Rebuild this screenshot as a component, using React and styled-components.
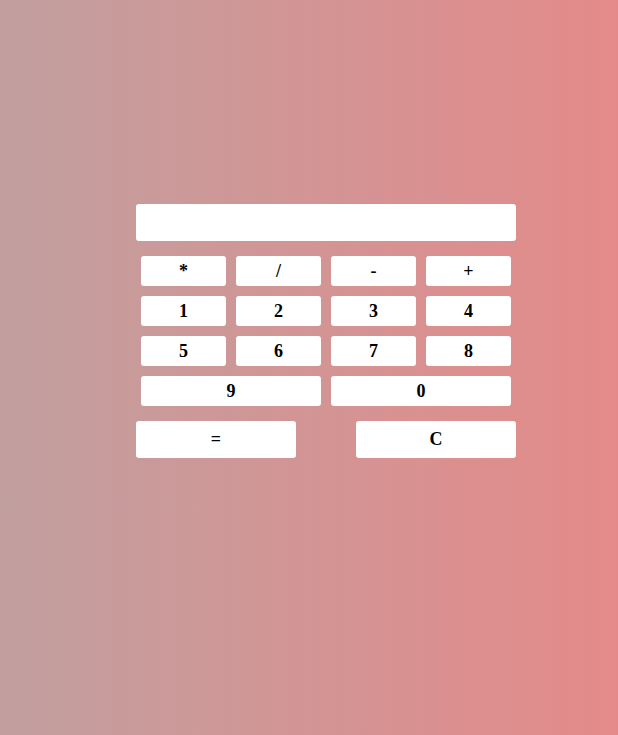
import React, { useState } from "react";
import styled, { createGlobalStyle } from "styled-components";

const GlobalStyle = createGlobalStyle`
  html, body {
    margin: 0;
    min-height: 100%;
  }
  body {
    min-height: 100vh;
    background: linear-gradient(to right, #c19f9f, #e48a8a);
    font-family: "Liberation Serif", "Times New Roman", serif;
  }
`;

const Page = styled.main`
  padding: 204px 0 0 136px;
`;

const Calculator = styled.div`
  width: 380px;
  display: flex;
  flex-direction: column;
`;

const Display = styled.input`
  box-sizing: border-box;
  width: 380px;
  height: 37px;
  border: none;
  border-radius: 3px;
  background: #fff;
  padding: 0 10px;
  font-family: inherit;
  font-size: 18px;
  outline: none;
`;

const Keys = styled.div`
  display: grid;
  grid-template-columns: repeat(4, 85px);
  grid-auto-rows: 30px;
  gap: 10px;
  padding: 0 5px;
  margin-top: 15px;
`;

const Key = styled.button`
  grid-column: span ${({ $span }) => $span || 1};
  border: none;
  border-radius: 3px;
  background: #fff;
  color: #000;
  font-family: inherit;
  font-weight: bold;
  font-size: 18px;
  padding: 0;
  cursor: pointer;
`;

const Actions = styled.div`
  display: flex;
  justify-content: space-between;
  margin-top: 15px;
`;

const ActionButton = styled.button`
  width: 160px;
  height: 37px;
  border: none;
  border-radius: 3px;
  background: #fff;
  color: #000;
  font-family: inherit;
  font-weight: bold;
  font-size: 18px;
  padding: 0;
  cursor: pointer;
`;

const keys = ["*", "/", "-", "+", "1", "2", "3", "4", "5", "6", "7", "8"];

const App = () => {
  const [value, setValue] = useState("");

  const press = (k) => setValue(value + k);

  const calculate = () => {
    try {
      // eslint-disable-next-line no-new-func
      setValue(String(Function(`return (${value})`)()));
    } catch (e) {
      setValue("Error");
    }
  };

  return (
    <>
      <GlobalStyle />
      <Page>
        <Calculator>
          <Display type="text" value={value} readOnly />
          <Keys>
            {keys.map((k) => (
              <Key key={k} onClick={() => press(k)}>
                {k}
              </Key>
            ))}
            <Key $span={2} onClick={() => press("9")}>9</Key>
            <Key $span={2} onClick={() => press("0")}>0</Key>
          </Keys>
          <Actions>
            <ActionButton onClick={calculate}>=</ActionButton>
            <ActionButton onClick={() => setValue("")}>C</ActionButton>
          </Actions>
        </Calculator>
      </Page>
    </>
  );
};

export default App;
